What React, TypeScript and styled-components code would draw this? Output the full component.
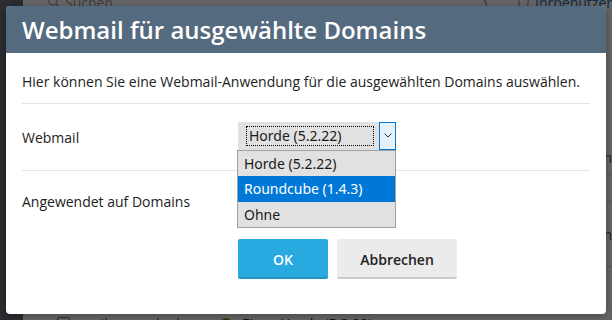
import React from "react";
import styled, { createGlobalStyle } from "styled-components";

const GlobalStyle = createGlobalStyle`
  html, body {
    margin: 0;
    padding: 0;
  }
  body {
    width: 612px;
    height: 320px;
    overflow: hidden;
    font-family: "Open Sans", "Noto Sans", sans-serif;
  }
`;

const Page = styled.div`
  position: relative;
  width: 612px;
  height: 320px;
  display: flex;
  overflow: hidden;
  background: #ffffff;
`;

const Sidebar = styled.div`
  width: 23px;
  flex: none;
  background: #6b707a;
`;

const Main = styled.div`
  flex: 1;
  display: flex;
  flex-direction: column;
  min-width: 0;
`;

const TopBar = styled.div`
  height: 16px;
  margin-top: -6px;
  display: flex;
  align-items: center;
  padding: 0 0 0 25px;
  font-size: 14px;
  color: #9a9a9a;
  .top-spacer {
    flex: 1;
  }
  .top-search {
    display: flex;
    align-items: center;
    gap: 5px;
  }
  .top-back {
    margin-right: 30px;
    color: #888;
  }
  .top-user {
    display: flex;
    align-items: center;
    gap: 6px;
    color: #1b6fb7;
    white-space: nowrap;
  }
`;

const List = styled.div`
  margin-top: 130px;
  display: flex;
  flex-direction: column;
`;

const ListRow = styled.div<{ $h: number }>`
  height: ${(p) => p.$h}px;
  border-bottom: 1px solid #d0d0d0;
  display: flex;
  align-items: center;
  justify-content: flex-end;
  font-size: 14px;
  color: #555;
`;

const BottomRow = styled.div`
  margin-top: 47px;
  height: 19px;
  flex: none;
  display: flex;
  align-items: center;
  gap: 10px;
  padding-left: 34px;
  font-size: 14px;
  .bottom-check {
    width: 11px;
    height: 11px;
    border: 1px solid #777;
    border-radius: 2px;
  }
  .bottom-link {
    color: #1b6fb7;
    width: 130px;
  }
  .bottom-dot {
    width: 12px;
    height: 12px;
    border-radius: 50%;
    background: #6ea02a;
  }
  .bottom-text {
    color: #333;
  }
`;

const Overlay = styled.div`
  position: absolute;
  inset: 0;
  background: rgba(0, 0, 0, 0.6);
`;

const Dialog = styled.div`
  position: absolute;
  left: 6px;
  top: 6px;
  width: 600px;
  height: 308px;
  background: #ffffff;
  border-radius: 4px;
  box-shadow: 0 2px 10px rgba(0, 0, 0, 0.3);
  display: flex;
  flex-direction: column;
`;

const Header = styled.div`
  height: 47px;
  flex: none;
  background: #546a7e;
  border-radius: 4px 4px 0 0;
  padding: 0 16px;
  display: flex;
  align-items: center;
  h1 {
    margin: 0;
    font-size: 24px;
    font-weight: 600;
    color: #ffffff;
  }
`;

const Body = styled.div`
  padding: 0 16px;
  color: #222;
  font-size: 14px;
`;

const Intro = styled.p`
  margin: 0;
  padding: 19px 0 11px;
  line-height: 20px;
  border-bottom: 1px solid #e5e5e5;
`;

const FieldRow = styled.div<{ $h: number; $line?: boolean }>`
  height: ${(p) => p.$h}px;
  display: flex;
  align-items: center;
  border-bottom: ${(p) => (p.$line ? "1px solid #e5e5e5" : "none")};
  .field-label {
    width: 216px;
    flex: none;
  }
`;

const SelectWrap = styled.div`
  position: relative;
  display: flex;
  height: 28px;
  margin-top: -3px;
`;

const SelectDisplay = styled.div`
  width: 141px;
  background: #e1e1e1;
  display: flex;
  align-items: center;
  padding: 0 6px 0 9px;
  box-sizing: border-box;
  font-family: "Noto Sans", "Liberation Sans", sans-serif;
  font-size: 14px;
  color: #1a1a1a;
  span {
    flex: 1;
    outline: 1px dotted #000;
    line-height: 18px;
    padding: 0 2px;
  }
`;

const SelectArrow = styled.div`
  width: 17px;
  box-sizing: border-box;
  border: 1px solid #0078d7;
  background: #e5f1fb;
  display: flex;
  align-items: center;
  justify-content: center;
`;

const ListBox = styled.ul`
  position: absolute;
  top: 100%;
  left: -1px;
  width: 159px;
  margin: 0;
  padding: 0;
  list-style: none;
  box-sizing: border-box;
  border: 1px solid #a0a0a0;
  background: #e1e1e1;
  font-family: "Noto Sans", "Liberation Sans", sans-serif;
  font-size: 14px;
  z-index: 2;
`;

const Option = styled.li<{ $active?: boolean }>`
  height: 25.5px;
  display: flex;
  align-items: center;
  padding-left: 6px;
  background: ${(p) => (p.$active ? "#0078d7" : "transparent")};
  color: ${(p) => (p.$active ? "#ffffff" : "#1a1a1a")};
`;

const Buttons = styled.div`
  display: flex;
  gap: 9px;
  padding-left: 216px;
  margin-top: 8px;
`;

const Button = styled.button<{ $primary?: boolean }>`
  height: 40px;
  width: ${(p) => (p.$primary ? 90 : 120)}px;
  border: none;
  border-radius: 2px;
  border-bottom: 2px solid ${(p) => (p.$primary ? "#2393c4" : "#cacaca")};
  background: ${(p) => (p.$primary ? "#28a9e0" : "#ebebeb")};
  color: ${(p) => (p.$primary ? "#ffffff" : "#222222")};
  font-family: "Open Sans", sans-serif;
  font-size: 14px;
  font-weight: 600;
  padding: 2px 0 0;
`;

const Chevron = () => (
  <svg width="8" height="5" viewBox="0 0 8 5">
    <polyline points="0.5,0.5 4,4 7.5,0.5" fill="none" stroke="#333" strokeWidth="1" />
  </svg>
);

const App: React.FC = () => {
  return (
    <>
      <GlobalStyle />
      <Page>
        <Sidebar />
        <Main>
          <TopBar>
            <div className="top-search">
              <svg width="12" height="12" viewBox="0 0 12 12">
                <circle cx="5" cy="5" r="4" fill="none" stroke="#999" strokeWidth="1.2" />
                <line x1="8" y1="8" x2="11.5" y2="11.5" stroke="#999" strokeWidth="1.2" />
              </svg>
              <span>Suchen...</span>
            </div>
            <div className="top-spacer" />
            <span className="top-back">\</span>
            <div className="top-user">
              <svg width="11" height="12" viewBox="0 0 11 12">
                <rect x="1" y="1" width="9" height="10" rx="3" fill="none" stroke="#888" />
              </svg>
              <span>Inrbenutzer</span>
            </div>
          </TopBar>
          <List>
            <ListRow $h={34}>n</ListRow>
            <ListRow $h={26} />
            <ListRow $h={64}>n</ListRow>
          </List>
          <BottomRow>
            <div className="bottom-check" />
            <span className="bottom-link">mail.example.de</span>
            <div className="bottom-dot" />
            <span className="bottom-text">Ein ... Horde (5.2.22)</span>
          </BottomRow>
        </Main>
        <Overlay />
        <Dialog>
          <Header>
            <h1>Webmail für ausgewählte Domains</h1>
          </Header>
          <Body>
            <Intro>
              Hier können Sie eine Webmail-Anwendung für die ausgewählten Domains auswählen.
            </Intro>
            <FieldRow $h={66} $line>
              <span className="field-label">Webmail</span>
              <SelectWrap>
                <SelectDisplay>
                  <span>Horde (5.2.22)</span>
                </SelectDisplay>
                <SelectArrow>
                  <Chevron />
                </SelectArrow>
                <ListBox>
                  <Option>Horde (5.2.22)</Option>
                  <Option $active>Roundcube (1.4.3)</Option>
                  <Option>Ohne</Option>
                </ListBox>
              </SelectWrap>
            </FieldRow>
            <FieldRow $h={60}>
              <span className="field-label">Angewendet auf Domains</span>
            </FieldRow>
            <Buttons>
              <Button $primary>OK</Button>
              <Button>Abbrechen</Button>
            </Buttons>
          </Body>
        </Dialog>
      </Page>
    </>
  );
};

export default App;
